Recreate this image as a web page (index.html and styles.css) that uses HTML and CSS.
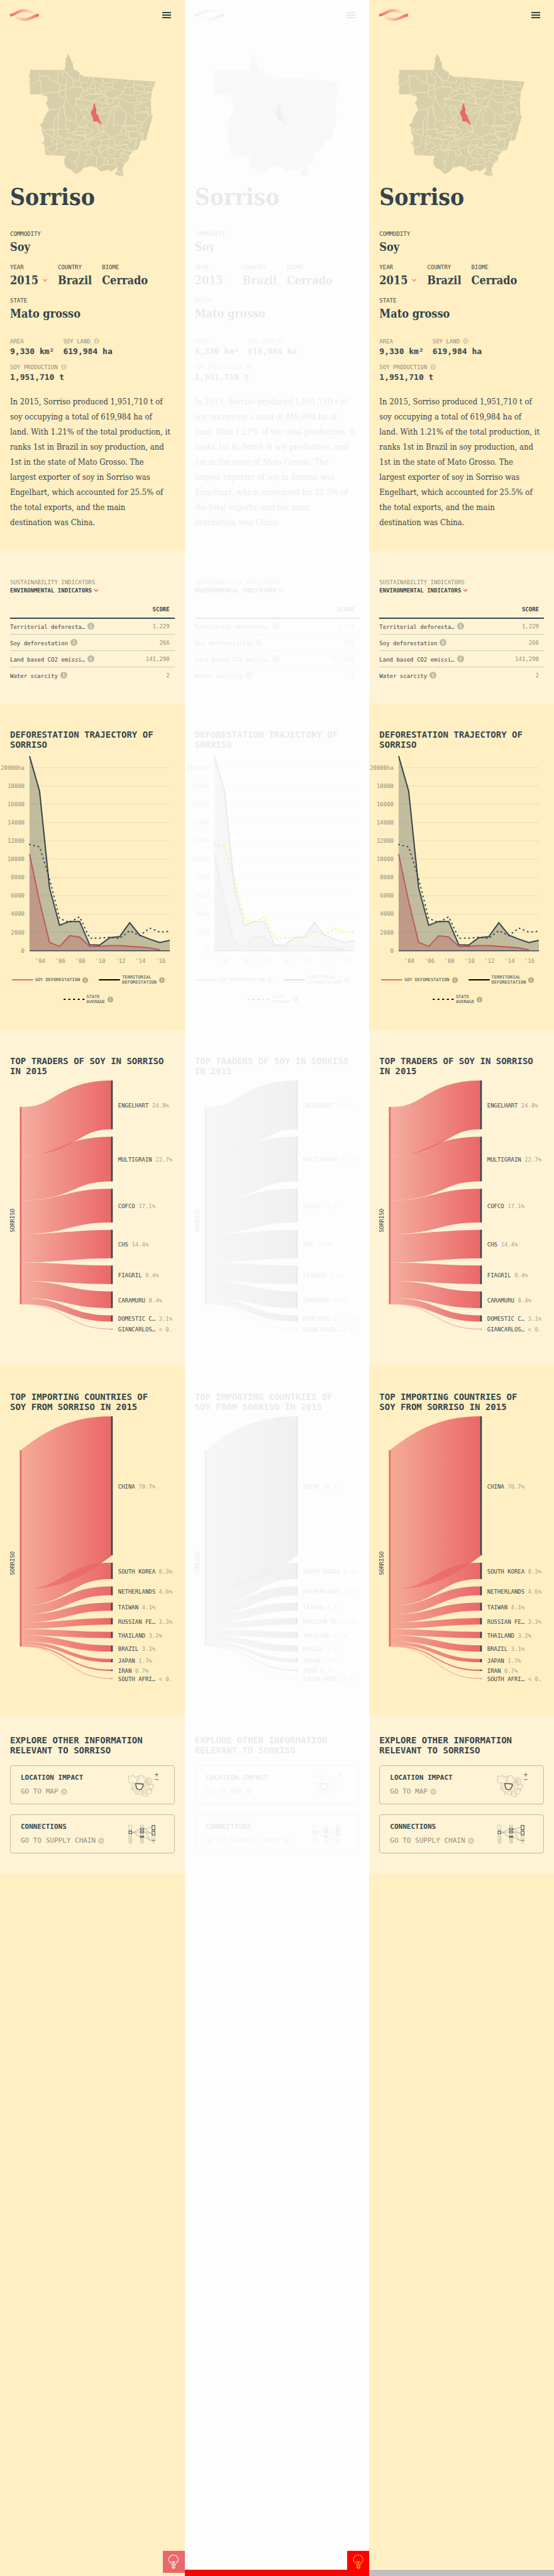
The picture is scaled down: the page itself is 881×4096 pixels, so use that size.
FILE: index.html
```html
<!DOCTYPE html>
<html lang="en">
<head>
<meta charset="utf-8">
<title>Sorriso – place profile</title>
<link rel="stylesheet" href="styles.css">
</head>
<body>
<svg class="defs" aria-hidden="true">
  <defs>
    <linearGradient id="flow" gradientUnits="userSpaceOnUse" x1="18" y1="0" x2="160" y2="0">
      <stop offset="0" stop-color="#ea6869" stop-opacity=".5"/>
      <stop offset="1" stop-color="#ea6869"/>
    </linearGradient>
    <linearGradient id="fadeRight"><stop offset="0" stop-color="#fb6273"/><stop offset="1" stop-color="#fb6273" stop-opacity="0"/></linearGradient>
    <linearGradient id="fadeLeft"><stop offset="0" stop-color="#fb6273" stop-opacity="0"/><stop offset="1" stop-color="#fb6273"/></linearGradient>
    <symbol id="info" viewBox="0 0 14 14"><circle cx="7" cy="7" r="7" fill="currentColor"/><path d="M6 3.2h2v1.6H6zM5.6 6H8v4.8H6V7h-.4z" fill="#fff3d5"/></symbol>
    <symbol id="go" viewBox="0 0 14 14"><circle cx="7" cy="7" r="7" fill="currentColor"/><path d="M3.6 9.6C3.800 7 5.200 6 7.400 5.900V4.200L10.800 7 7.400 9.600V8C5.800 8 4.600 8.400 3.600 9.600z" fill="#fff3d5"/></symbol>
    <symbol id="state" viewBox="170 320 785 760">
      <path fill="#d7cfab" d="M412 325 418 335 430 355 433 370 443 383 442 400 448 420 460 428 475 434 485 442 485 454 500 456 508 464 620 472 760 483 948 496 940 520 932 540 925 560 922 600 917 605 920 625 921 660 922 700 932 708 926 725 921 745 912 770 908 795 898 820 893 845 886 857 862 856 853 868 850 885 840 910 820 917 810 923 800 935 785 950 788 965 775 985 760 995 748 1020 746 1045 756 1072 730 1072 705 1066 698 1058 712 1045 716 1018 700 1030 672 1046 660 1034 640 1040 615 1045 600 1034 585 1022 550 1011 530 1020 508 1022 495 1040 480 1052 458 1060 445 1050 430 1032 410 1028 392 1005 390 970 400 950 274 945 272 910 268 885 248 866 268 865 267 835 258 815 252 790 255 775 237 762 258 748 265 725 275 700 290 680 297 668 290 650 277 628 290 605 285 585 258 580 252 574 181 574 180 545 183 530 177 510 180 485 175 460 182 445 181 424 388 426 397 410 396 385 402 370 396 358 406 345z"/>
      <g fill="none" stroke="#fbebbd" stroke-width="3" stroke-linejoin="round">
        <path d="M183 508 203 510 215 500 228 492 240 487M238 458 246 460 278 462 300 470 298 480 315 500 335 492 342 505 358 506 364 520 360 548 355 562 340 560 320 562 300 562 275 568 254 572 248 545 243 510 243 480 238 458M350 426 349 445 355 465 350 490 354 506M364 517H398M388 434 378 440 376 452 386 466 402 470 405 500 398 520 396 545 400 580 397 610 388 635 365 655 345 667 297 668"/>
        <path d="M388 434 402 440 415 455 430 470 445 487 470 490 485 478 483 455M402 436 420 465 440 480 445 495 445 515 450 527M362 548 380 550 397 540 430 532 450 527 500 532 505 545 503 570 487 575 490 595 475 605 460 600 462 640 455 652 440 660 428 640 412 625 408 600 398 575M362 550 357 570 362 590 378 593 393 600M475 490 495 505 492 532M500 500 532 503 537 480 545 470M565 470 567 490 555 505 553 525 530 535 530 555 510 545M627 475 625 505 610 515 590 495 572 487M687 480 685 495 660 508 630 502M725 483 700 500 687 515 690 528 660 530 640 520 615 517"/>
        <path d="M788 488 765 515 757 540 752 562 735 550 712 543 680 540 655 550 637 568 640 580 655 590 665 598 690 600 712 590 725 580 750 567M817 490 816 520 820 545 817 580 785 580 760 575 750 567M760 533 790 535 816 530M816 513 850 516 880 525 920 526 925 520 910 500M880 525 878 555 850 558 820 545M878 555 925 562M850 575 865 590 863 600 850 612 838 610 825 585 830 577 850 575 925 562M865 592 920 598M745 597 760 612 785 623 820 625 850 622 880 625 915 610"/>
        <path d="M742 578 728 595 710 598 690 615 685 630 660 637 640 630 620 625 600 622 585 615 560 618 530 610 500 608 452 600 470 598 500 590 520 582 545 570 570 575 590 570 632 575 630 590 605 595 600 610M745 597 725 620 722 645 700 660 680 665 660 680 640 690 610 695M722 645 690 648 660 655 625 660 615 680 595 690M722 645 735 655 760 685 770 700 765 730 755 765 740 770 720 755 690 772 692 730 690 700 715 665M770 690 800 700 800 715 822 730 825 690 818 660 825 640 850 635 885 620M825 650 850 675 880 680 895 675M825 690 900 682 905 705 880 740 860 760 800 765 755 762M825 730 850 740 870 748M885 640 890 660 905 650 905 700 918 705M685 665 670 690 665 720 650 745 648 770 635 775 615 760"/>
        <path d="M570 600 575 615 560 640 540 650 530 670 545 690 530 705 510 712 500 695 487 660 465 635M510 712 530 725 545 745 565 740M480 645 520 645 530 665 500 670 490 655M388 640 390 680 400 715 412 733 450 730 465 715 460 685 440 660M362 660 355 700 352 760 350 830M355 693 335 720 325 755 328 800 350 790M385 645 395 700 402 730 395 760 405 785 417 787 415 800 408 812 440 805 460 795 468 780 500 770 510 755 525 765 530 780 480 775M350 787H417M510 712 500 730 490 755 470 770 450 750 450 740 470 730M510 712 530 750 535 775 560 790 560 810 530 825 510 835M575 745 590 765 600 790 620 800 635 805 630 780 618 762M635 805 650 820 670 835 700 830 730 815 740 790 755 768 770 795 765 815 735 820"/>
        <path d="M255 790H275L300 790 315 785 325 800 330 825 310 835 300 820 275 812 260 790M350 830 330 845 315 850 320 880 305 893 282 895 285 915 300 930 320 942 335 925 345 905 340 875 350 850 372 840 370 825 350 830M340 875 355 880 370 860 390 870 395 890 415 895 425 880 440 885 435 905 450 918 425 910 405 915 390 900 370 905M345 905 365 910 395 930 410 935M365 945 380 925M372 840 400 850 430 845 445 860 450 880 465 890 485 875 490 860 475 850 440 850 420 835 395 840M440 805 480 800 520 800 525 820 500 830 470 820 440 820 445 810M455 822 490 828 510 815 520 845 500 870 490 890 470 900 450 918M500 870 530 845 560 835 590 815 620 805 637 805"/>
        <path d="M520 845 545 850 580 835 615 830 637 808M525 860 545 860 560 850 600 850 620 855 615 880 600 890 580 905 560 900 545 885 540 865M620 855 650 850 658 840 665 850 695 845 698 880 690 900 665 900 660 885 665 860M605 895 620 885 655 885 655 900 630 915 620 940 605 925 605 895M525 865 530 890 500 895 480 910 450 918M450 915 480 925 485 950 465 970 460 990 445 985 465 1000 465 1030 445 1045M480 915 520 915 530 930 525 945 555 940 540 960 515 990 510 1020M530 905 560 925 560 945 592 958 585 1022M560 945 550 910 540 890M600 890 605 935 615 955 635 965 635 1003 605 1020 590 1025M635 1003 690 1003 716 1018"/>
        <path d="M658 905 660 940 680 950 700 935 700 915 690 905 665 905M635 965 655 960 655 1000M655 985 675 965 700 965 705 985 690 1003M700 920 740 905 755 910 750 930 730 935 735 960 710 970M698 880 720 880 745 855 780 850 790 860 795 868 798 840 770 830 765 810M765 800 835 803 845 790 840 775 760 768M782 800 785 840 800 845 830 845 850 835 870 810 850 820 850 800 860 780 870 745M830 845 828 885 818 912M875 810 870 835 862 856M750 875 775 885 785 910 830 920M705 890 745 885 780 880M755 910 810 925M740 935 770 945 785 950M735 960 760 965 775 985M700 995 730 980 750 990 765 995M575 500 580 545 585 575M600 525 605 545 615 565 590 570M615 525 640 530 650 545 625 555 612 550M530 555 545 540 580 538M632 580 650 600 655 635 645 620 640 600M590 655 620 655 625 665M712 1045 735 1050 745 1070"/>
      </g>
      <path fill="#ea6869" d="M573 628 578 632 580 650 586 660 585 690 597 703 605 728 615 745 618 760 605 752 592 738 580 741 568 738 564 712 553 692 554 680 566 662 568 640z"/>
    </symbol>
  </defs>
</svg>

<main class="shots" id="shots"></main>

<template id="page">
  <div class="page">
    <header class="bar">
      <a class="bar__logo" href="#" aria-label="Home">
        <svg viewBox="60 54 178 76"><g fill="none" stroke-width="17"><path stroke="url(#fadeRight)" d="M60 92C92 92 104 64 148 64 175 64 190 75 215 84"/><path stroke="url(#fadeLeft)" d="M80 100C100 106 118 119 148 119 192 119 206 92 238 92"/></g></svg>
      </a>
      <button class="bar__menu" type="button" aria-label="Menu"><i></i><i></i><i></i></button>
    </header>
    <section class="hero">
      <svg class="hero__map" role="img" aria-label="Map of Mato Grosso"><use href="#state"/></svg>
      <h1 class="hero__title">Sorriso</h1>
      <div class="facts">
        <div class="facts__row"><div class="fact"><span class="label">COMMODITY</span><b class="fact__value">Soy</b></div></div>
        <div class="facts__row">
          <label class="fact fact--year"><span class="label">YEAR</span>
            <span class="picker"><select class="picker__select"><option>2015</option></select><svg class="picker__arrow" viewBox="0 0 8 5"><path d="M.5 1C2 1 3 4 4 4S6 1 7.500 1" fill="none" stroke="#fb6273" stroke-width="1.200"/></svg></span></label>
          <div class="fact"><span class="label">COUNTRY</span><b class="fact__value">Brazil</b></div>
          <div class="fact"><span class="label">BIOME</span><b class="fact__value">Cerrado</b></div>
        </div>
        <div class="facts__row"><div class="fact"><span class="label">STATE</span><b class="fact__value">Mato grosso</b></div></div>
      </div>
      <div class="figures">
        <div class="figure"><span class="label label--soft">AREA</span><b class="figure__value">9,330 km²</b></div>
        <div class="figure"><span class="label label--soft">SOY LAND<svg class="info"><use href="#info"/></svg></span><b class="figure__value">619,984 ha</b></div>
        <div class="figure"><span class="label label--soft">SOY PRODUCTION<svg class="info"><use href="#info"/></svg></span><b class="figure__value">1,951,710 t</b></div>
      </div>
      <p class="summary">In 2015, Sorriso produced 1,951,710 t of<br>
        soy occupying a total of 619,984 ha of<br>
        land. With 1.21% of the total production, it<br>
        ranks 1st in Brazil in soy production, and<br>
        1st in the state of Mato Grosso. The<br>
        largest exporter of soy in Sorriso was<br>
        Engelhart, which accounted for 25.5% of<br>
        the total exports, and the main<br>
        destination was China.</p>
    </section>
    <section class="section section--light indicators">
      <div class="indicators__head">
        <span class="indicators__over">SUSTAINABILITY INDICATORS</span>
        <button class="indicators__pick" type="button">ENVIRONMENTAL INDICATORS<svg class="indicators__arrow" viewBox="0 0 8 6"><path d="M1 1C2 1 3 4 4 4S6 1 7 1" fill="none" stroke="#ea6869" stroke-width="1.600"/></svg></button>
      </div>
      <table class="scores">
        <thead><tr><th aria-label="Indicator"></th><th>SCORE</th></tr></thead>
        <tbody>
          <tr><td>Territorial deforesta…<svg class="info"><use href="#info"/></svg></td><td>1,229</td></tr>
          <tr><td>Soy deforestation<svg class="info"><use href="#info"/></svg></td><td>266</td></tr>
          <tr><td>Land based CO2 emissi…<svg class="info"><use href="#info"/></svg></td><td>141,298</td></tr>
          <tr><td>Water scarcity<svg class="info"><use href="#info"/></svg></td><td>2</td></tr>
        </tbody>
      </table>
    </section>
    <section class="section trajectory">
      <h2 class="heading">DEFORESTATION TRAJECTORY OF SORRISO</h2>
      <div class="plot"><svg class="plot__chart" viewBox="0 0 294 346" data-chart="trajectory"></svg></div>
      <ul class="legend">
        <li class="legend__item"><i class="legend__line legend__line--soy"></i><span>SOY DEFORESTATION</span><svg class="info"><use href="#info"/></svg></li>
        <li class="legend__item"><i class="legend__line"></i><span>TERRITORIAL<br>DEFORESTATION</span><svg class="info"><use href="#info"/></svg></li>
        <li class="legend__item"><svg class="legend__dots" viewBox="0 0 34 2"><path d="M1 1H34" stroke="#000" stroke-width="2" stroke-linecap="round" stroke-dasharray="1.500 6"/></svg><span>STATE<br>AVERAGE</span><svg class="info"><use href="#info"/></svg></li>
      </ul>
    </section>
    <section class="section section--light flows">
      <h2 class="heading">TOP TRADERS OF SOY IN SORRISO IN 2015</h2>
      <svg class="flows__chart" viewBox="0 0 262 402" data-chart="traders"></svg>
    </section>
    <section class="section flows">
      <h2 class="heading">TOP IMPORTING COUNTRIES OF SOY FROM SORRISO IN 2015</h2>
      <svg class="flows__chart" viewBox="0 0 262 425" data-chart="importers"></svg>
    </section>
    <section class="section section--light explore">
      <h2 class="heading">EXPLORE OTHER INFORMATION RELEVANT TO SORRISO</h2>
      <a class="card" href="#">
        <span class="card__text"><b class="card__title">LOCATION IMPACT</b><span class="card__go">GO TO MAP<svg class="card__icon"><use href="#go"/></svg></span></span>
        <svg class="card__art" viewBox="784 375 190 180" fill="none" stroke-linejoin="round">
          <g stroke="#b9b99f" stroke-width="3"><path d="M788 410 796 407 802 414 812 406 820 405 822 416 842 414 845 425 838 434 840 445 832 454 808 450 798 454 785 440 789 426zM848 408 860 410 870 406 884 412 880 422 892 430 886 446 878 454 852 452 846 436 854 428zM896 422 905 418 918 420 928 430 930 450 918 458 905 456 898 440zM903 430 915 426 918 445 908 448zM896 440 900 452 896 470 884 474 884 460zM806 462 816 456 828 466 822 478 810 478zM806 486 816 484 817 491 808 491zM908 462 938 460 940 472 932 490 910 484zM820 494 834 492 840 502 828 508 818 502zM882 482 896 484 892 500 876 504 872 492zM902 492 928 490 926 510 914 522 898 514zM850 502 866 502 874 514 862 526 848 516zM872 514 890 512 904 530 888 535 874 526zM832 514h7v6h-7z"/></g>
          <path stroke="#34444c" stroke-width="5" d="M832 455 878 459 876 474 864 492 846 491 836 482z"/>
          <path stroke="#34444c" stroke-width="3" d="M948 401H971M959.500 390V413M948 431H971"/>
        </svg>
      </a>
      <a class="card" href="#">
        <span class="card__text"><b class="card__title">CONNECTIONS</b><span class="card__go">GO TO SUPPLY CHAIN<svg class="card__icon"><use href="#go"/></svg></span></span>
        <svg class="card__art" viewBox="784 680 190 180" fill="none">
          <g stroke="#bdbca2" stroke-width="3"><path d="M790 715H809V744H790zM790 775H809V785H790zM790 792H809V800H790zM860 715H880V725H860zM860 766H880V776H860zM860 794H880V802H860zM931 781H949V799H931z"/><path d="M789 748H811M789 806H811M789 812H811M789 818H811M789 824H811M859 806H882M859 812H882M859 818H882M859 824H882M929 815H951M929 823H951"/><path stroke-width="4" d="M810 759C835 759 835 739 860 739M810 759C835 759 835 756 860 756M810 759C835 759 840 785 860 786M880 738C905 738 905 730 930 730M880 738C905 738 905 764 930 764M880 756C905 756 905 764 930 764M880 756C905 756 905 808 930 808M880 786C900 786 905 808 930 808"/></g>
          <g stroke="#34444c" stroke-width="4"><path d="M791 751H808V767H791zM861 734H880V744H861zM861 752H880V761H861zM861 782H880V789H861zM932 716H949V743H932zM932 751H949V775H932zM930 807H951"/></g>
        </svg>
      </a>
    </section>
    <button class="tip" type="button" aria-label="Tips">
      <svg class="tip__bulb" viewBox="0 0 22 28" fill="none" stroke="currentColor"><path d="M7.500 18.500C7 16 1.500 15 1.500 10A9.200 9.200 0 0 1 20 10C20 15 15 16 14.500 18.500z" stroke-width="1.300"/><path d="M10.800 18V13M7.500 13 9 15 10.800 13.500 12.500 15 14 13" stroke-width="1.300"/><path d="M7.500 21H14.500M7.500 23.500H14.500M7.500 25.500H14.500M10 27.500H12" stroke-width="1.200"/></svg>
    </button>
  </div>
</template>
<script src="main.js"></script>
</body>
</html>
```

FILE: styles.css
```css
* { box-sizing: border-box; }

body {
  margin: 0;
  color: #34444c;
  background: #fff;
  font-family: "DejaVu Sans Mono", "Liberation Mono", monospace;
  font-size: 9px;
}

.defs { position: absolute; width: 0; height: 0; }
h1, h2, p, ul { margin: 0; padding: 0; }
button { padding: 0; border: 0; background: none; color: inherit; font: inherit; }

.shots {
  display: grid;
  grid-template-columns: repeat(3, minmax(0, 1fr));
  min-height: 100vh;
}
.shot { display: flex; flex-direction: column; }
.page { position: relative; flex: 1; background: #ffefc2; }

.bar {
  display: flex;
  align-items: center;
  justify-content: space-between;
  height: 48px;
  padding: 0 22px 0 16px;
}
.bar__logo svg { display: block; width: 46px; height: 20px; }
.bar__menu { display: flex; flex-direction: column; gap: 2px; width: 14px; }
.bar__menu i { height: 2px; background: #34444c; }

.hero { padding: 36px 16px 33px; }
.hero__map { display: block; width: 78%; aspect-ratio: 785 / 760; margin-left: 29px; }
.hero__title {
  margin-top: 9px;
  font: bold 37px/44px "DejaVu Serif Condensed", "DejaVu Serif", serif;
}

.facts { display: flex; flex-direction: column; gap: 14px; padding-top: 31px; }
.facts__row { display: flex; gap: 16px; }
.fact { display: flex; flex-direction: column; gap: 3px; }
.fact--year { width: 60px; }
.fact__value, .picker__select {
  font: bold 18px/24px "DejaVu Serif Condensed", "DejaVu Serif", serif;
  white-space: nowrap;
}
.label { display: flex; align-items: center; gap: 4px; font-size: 9px; line-height: 12px; }
.label--soft { color: #8e907e; }
.picker { display: flex; align-items: center; justify-content: space-between; }
.picker__select {
  appearance: none;
  width: 48px;
  height: 24px;
  padding: 0;
  border: 0;
  background: none;
  color: inherit;
}
.picker__arrow { width: 9px; height: 5px; }

.figures { display: flex; flex-wrap: wrap; gap: 11px 14px; padding-top: 26px; }
.figure { display: flex; flex-direction: column; gap: 2px; }
.figure__value { font-size: 13px; line-height: 16px; }
.info { flex: none; width: 11px; height: 11px; color: #bfbda4; }
.label .info { height: 9px; color: #dad1ad; }

.summary {
  margin: 19px -8px 0 0;
  font: 13px/24px "DejaVu Serif Condensed", "DejaVu Serif", serif;
}

.section { padding: 42px 16px 0; }
.section--light { background: #fff3d5; }
.heading { padding-right: 12px; font-size: 14px; line-height: 16px; }

.indicators { padding-top: 44px; padding-bottom: 31px; }
.indicators__head { display: flex; flex-direction: column; align-items: flex-start; gap: 1px; line-height: 12px; }
.indicators__over { color: #8e907e; }
.indicators__pick { display: flex; align-items: center; gap: 3px; height: 12px; font-weight: bold; }
.indicators__arrow { width: 8px; height: 6px; }
.scores { width: 100%; margin-top: 12px; border-collapse: collapse; }
.scores th, .scores td { padding: 0; text-align: left; height: 26px; }
.scores th { border-bottom: 2px solid #34444c; }
.scores tr > :last-child { padding-right: 8px; text-align: right; }
.scores td:last-child { color: #8e907e; }
.scores tbody tr + tr { border-top: 1px solid #cfcab0; }
.scores .info { margin-left: 4px; vertical-align: -1px; }

.trajectory { padding-left: 0; padding-right: 0; padding-bottom: 40px; }
.trajectory .heading { padding: 0 16px; }
.plot { position: relative; margin-top: 4px; }
.plot__chart { display: block; width: 100%; }
.plot__marks { position: absolute; inset: 0; width: 100%; }
.chart-text { font-size: 9px; fill: #8e907e; }
.legend {
  display: flex;
  flex-wrap: wrap;
  justify-content: center;
  gap: 15px 16px;
  margin-top: 9px;
  padding: 0 20px 0 8px;
  list-style: none;
  font-size: 7px;
  line-height: 8px;
}
.legend__item { display: flex; align-items: center; gap: 3px; height: 16px; }
.legend__line { width: 34px; height: 2px; border-radius: 1px; background: #000; }
.legend__line--soy { background: #ea6869; }
.legend__dots { width: 34px; height: 2px; }
.legend .info { height: 9px; color: #b5a988; }

.flows { padding-bottom: 51px; }
.flows__chart { display: block; width: 100%; margin-top: 7px; overflow: visible; }
.flows__label { font-size: 9px; fill: #34444c; }
.flows__share { fill: #a3a38e; }

.explore { display: flex; flex-direction: column; gap: 16px; padding-top: 32px; padding-bottom: 32px; }
.card {
  display: flex;
  align-items: center;
  justify-content: space-between;
  height: 62px;
  padding: 0 24px 0 16px;
  border: 1px solid #bcbaa3;
  border-radius: 4px;
  color: inherit;
  text-decoration: none;
}
.card__text { display: flex; flex-direction: column; gap: 6px; font-size: 11px; line-height: 16px; }
.card__go { display: flex; align-items: center; gap: 4px; color: #8e907e; }
.card__icon { width: 10px; height: 10px; color: #d7cfb0; }
.card__art { width: 50px; height: 47px; }

.tip {
  position: absolute;
  right: 0;
  bottom: 5px;
  display: flex;
  align-items: center;
  justify-content: center;
  width: 35px;
  height: 35px;
  background: #ea6869;
  color: #fff;
}
.tip__bulb { width: 18px; height: 23px; }

/* Difference between the two captures */
.shot--diff .page, .shot--diff .section--light { background: #fdfdfd; }
.shot--diff .bar,
.shot--diff .hero,
.shot--diff .section > :not(.plot),
.shot--diff .plot__chart { filter: grayscale(1); opacity: .1; }
.shot--diff::after { content: ""; height: 10px; background: #f00; }
.shot--diff .tip { bottom: 0; height: 30px; align-items: flex-start; padding-top: 6px; background: #f00; color: #ff0; }
.shot--diff .tip__bulb { stroke-dasharray: 3 1; }

.shot--test::after { content: ""; height: 10px; border-top: 1px solid #fff; background: #bfbfbf; }
```

FILE: main.js
```js
const NS = "http://www.w3.org/2000/svg";

function el(parent, name, attrs, text) {
  const node = document.createElementNS(NS, name);
  for (const key in attrs) node.setAttribute(key, attrs[key]);
  if (text !== undefined) node.textContent = text;
  parent.appendChild(node);
  return node;
}

const flows = {
  traders: {
    start: 42, mid: 223,
    rows: [["ENGELHART", "24.8%", 77.8], ["MULTIGRAIN", "22.7%", 71.2], ["COFCO", "17.1%", 53.6], ["CHS", "14.4%", 45.3],
      ["FIAGRIL", "9.4%", 29.6], ["CARAMURU", "8.4%", 26.4], ["DOMESTIC C…", "3.1%", 9.7], ["GIANCARLOS…", "< 0.", .7]]
  },
  importers: {
    start: 54, mid: 234,
    rows: [["CHINA", "70.7%", 221.4], ["SOUTH KOREA", "8.3%", 26], ["NETHERLANDS", "4.6%", 14.2], ["TAIWAN", "4.1%", 12.8],
      ["RUSSIAN FE…", "3.3%", 10.2], ["THAILAND", "3.2%", 10], ["BRAZIL", "3.1%", 9.8], ["JAPAN", "1.7%", 5.3],
      ["IRAN", "0.7%", 2.2], ["SOUTH AFRI…", "< 0.", .7]]
  }
};

function drawFlow(svg, data) {
  const gap = 11.7, x0 = 18.5, x1 = 160.5, mid = (x0 + x1) / 2;
  let left = data.start, right = 0;
  const total = data.rows.reduce((sum, row) => sum + row[2], 0);
  el(svg, "rect", { x: 15.5, y: left, width: 3, height: total, fill: "#ea6869" });
  for (const [name, share, h] of data.rows) {
    const a = left + h / 2, b = right + h / 2;
    el(svg, "rect", { x: x1, y: right, width: 3, height: h, fill: "#34444c" });
    el(svg, "path", { d: `M${x0} ${a}C${mid} ${a} ${mid} ${b} ${x1} ${b}`, fill: "none", stroke: "url(#flow)", "stroke-width": h });
    const label = el(svg, "text", { x: 172, y: b + 4, class: "flows__label" }, name + " ");
    el(label, "tspan", { class: "flows__share" }, share);
    left += h;
    right += h + gap;
  }
  el(svg, "text", { x: -data.mid, y: 7, transform: "rotate(-90)", "text-anchor": "middle", class: "flows__label" }, "SORRISO");
}

const series = {
  territorial: [21259, 17436, 6853, 2774, 3193, 3193, 653, 606, 1422, 1538, 3054, 1702, 1259, 886, 1119],
  soy: [10559, 5385, 909, 466, 1632, 1492, 466, 466, 559, 559, 466, 396, 303, 93],
  average: [11608, 11329, 7832, 3520, 3077, 3706, 1375, 1375, 1469, 1329, 2191, 1632, 2471, 2028, 2121]
};
const px = i => 47 + i * 15.95;
const py = v => 316 - v * .01457;
const line = values => "M" + values.map((v, i) => px(i).toFixed(1) + " " + py(v).toFixed(1)).join("L");

function drawTrajectory(svg) {
  for (let v = 0; v <= 20000; v += 2000) {
    el(svg, "path", { d: `M47 ${py(v)}H270.500`, stroke: "#e9dfba", "stroke-width": 1 });
    el(svg, "text", { x: 39, y: py(v) + 3, "text-anchor": "end", class: "chart-text" }, v === 20000 ? "20000ha" : v);
  }
  el(svg, "path", { d: line(series.territorial) + "V316H47z", fill: "#34444c", "fill-opacity": .3 });
  el(svg, "path", { d: line(series.soy) + "V316H47z", fill: "#b95c60", "fill-opacity": .35 });
  el(svg, "path", { d: line(series.soy), fill: "none", stroke: "#b95c60", "stroke-width": 2 });
  el(svg, "path", { d: line(series.territorial), fill: "none", stroke: "#34444c", "stroke-width": 2 });
  el(svg, "path", { d: line(series.average), fill: "none", stroke: "#34444c", "stroke-width": 2, "stroke-linecap": "round", "stroke-dasharray": "1 6" });
  el(svg, "path", { d: "M47 316H270.500", stroke: "#34444c", "stroke-width": 1.5 });
  ["'04", "'06", "'08", "'10", "'12", "'14", "'16"].forEach((year, i) =>
    el(svg, "text", { x: px(1 + 2 * i) + 1, y: 335, "text-anchor": "middle", class: "chart-text" }, year));
}

function drawMarks(plot) {
  const svg = el(plot, "svg", { viewBox: "0 0 294 346", class: "plot__marks" });
  el(svg, "path", { d: line(series.average), fill: "none", stroke: "#ff0", "stroke-width": 1.5, "stroke-dasharray": "1.500 5.500", "stroke-dashoffset": -1 });
}

const template = document.getElementById("page");
for (const kind of ["base", "diff", "test"]) {
  const shot = document.createElement("div");
  shot.className = "shot shot--" + kind;
  shot.appendChild(template.content.cloneNode(true));
  drawTrajectory(shot.querySelector('[data-chart="trajectory"]'));
  for (const name in flows) drawFlow(shot.querySelector(`[data-chart="${name}"]`), flows[name]);
  if (kind === "diff") drawMarks(shot.querySelector(".plot"));
  if (kind === "test") shot.querySelector(".tip").remove();
  document.getElementById("shots").appendChild(shot);
}
```
